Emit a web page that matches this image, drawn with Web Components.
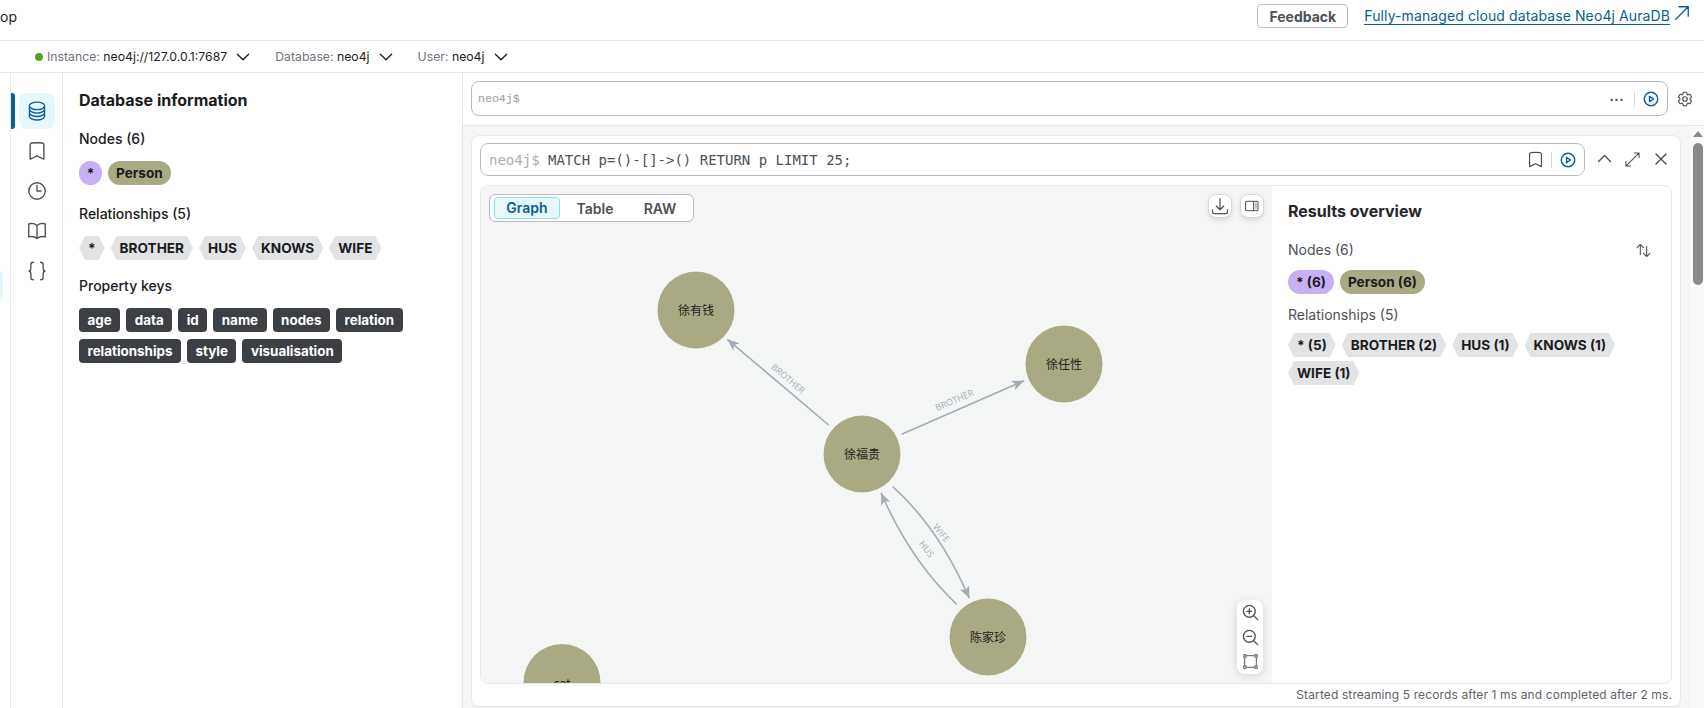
<!DOCTYPE html>
<html>
<head>
<meta charset="utf-8">
<title>Neo4j Browser</title>
<style>
  html, body { margin: 0; height: 708px; overflow: hidden; background: #fff; }
  body { font-family: Inter, "Noto Sans CJK SC", sans-serif; font-size: 14px; color: #1a1b1d; }
</style>
</head>
<body>
<nb-app></nb-app>

<script>
(function() {

  const PATHS = {
    db: 'M20.25 6.375c0 2.278-3.694 4.125-8.25 4.125S3.75 8.653 3.75 6.375m16.5 0c0-2.278-3.694-4.125-8.25-4.125S3.75 4.097 3.75 6.375m16.5 0v11.25c0 2.278-3.694 4.125-8.25 4.125s-8.25-1.847-8.25-4.125V6.375m16.5 0v3.75m-16.5-3.75v3.75m16.5 0v3.75C20.25 16.153 16.556 18 12 18s-8.25-1.847-8.25-4.125v-3.75m16.5 0c0 2.278-3.694 4.125-8.25 4.125s-8.25-1.847-8.25-4.125',
    bookmark: 'M17.593 3.322c1.1.128 1.907 1.077 1.907 2.185V21L12 17.25 4.5 21V5.507c0-1.108.806-2.057 1.907-2.185a48.507 48.507 0 0 1 11.186 0Z',
    clock: 'M12 6v6h4.5m4.5 0a9 9 0 1 1-18 0 9 9 0 0 1 18 0Z',
    book: 'M12 6.042A8.967 8.967 0 0 0 6 3.75c-1.052 0-2.062.18-3 .512v14.25A8.987 8.987 0 0 1 6 18c2.305 0 4.408.867 6 2.292m0-14.25a8.966 8.966 0 0 1 6-2.292c1.052 0 2.062.18 3 .512v14.25A8.987 8.987 0 0 0 18 18a8.967 8.967 0 0 0-6 2.292m0-14.25v14.25',
    braces: 'M8 2.5c-2 0-2.700.8-2.700 2.500v4.200c0 1.600-.6 2.400-2 2.800 1.400.4 2 1.200 2 2.800V19c0 1.700.7 2.500 2.700 2.500M16 2.500c2 0 2.700.8 2.700 2.500v4.200c0 1.600.6 2.400 2 2.800-1.400.4-2 1.200-2 2.800V19c0 1.700-.7 2.500-2.700 2.500',
    gear: 'M9.594 3.94c.09-.542.56-.94 1.11-.94h2.593c.55 0 1.02.398 1.11.94l.213 1.281c.063.374.313.686.645.87.074.04.147.083.22.127.325.196.72.257 1.075.124l1.217-.456a1.125 1.125 0 0 1 1.37.49l1.296 2.247a1.125 1.125 0 0 1-.26 1.431l-1.003.827c-.293.241-.438.613-.43.992a7.723 7.723 0 0 1 0 .255c-.008.378.137.75.43.991l1.004.827c.424.35.534.955.26 1.43l-1.298 2.247a1.125 1.125 0 0 1-1.369.491l-1.217-.456c-.355-.133-.75-.072-1.076.124a6.47 6.47 0 0 1-.22.128c-.331.183-.581.495-.644.869l-.213 1.281c-.09.543-.56.94-1.11.94h-2.594c-.55 0-1.019-.398-1.11-.94l-.213-1.281c-.062-.374-.312-.686-.644-.87a6.52 6.52 0 0 1-.22-.127c-.325-.196-.72-.257-1.076-.124l-1.217.456a1.125 1.125 0 0 1-1.369-.49l-1.297-2.247a1.125 1.125 0 0 1 .26-1.431l1.004-.827c.292-.24.437-.613.43-.991a6.932 6.932 0 0 1 0-.255c.007-.38-.138-.751-.43-.992l-1.004-.827a1.125 1.125 0 0 1-.26-1.43l1.297-2.247a1.125 1.125 0 0 1 1.37-.491l1.216.456c.356.133.751.072 1.076-.124.072-.044.146-.086.22-.128.332-.183.582-.495.644-.869l.214-1.28ZM15 12a3 3 0 1 1-6 0 3 3 0 0 1 6 0Z',
    chevdown: 'm19.5 8.25-7.5 7.5-7.5-7.500',
    chevup: 'm4.500 15.750 7.500-7.500 7.500 7.500',
    close: 'M6 18 18 6M6 6l12 12',
    external: 'm4.500 19.500 15-15m0 0H8.250m11.250 0v11.250',
    expand: 'M4.500 19.500 19.500 4.500m0 0h-5.500m5.500 0v5.500M4.500 19.500h5.500m-5.500 0V14',
    play: 'M21 12a9 9 0 1 1-18 0 9 9 0 0 1 18 0ZM10 8.500v7l5.500-3.500-5.500-3.500Z',
    download: 'M3 16.500v2.250A2.250 2.250 0 0 0 5.250 21h13.500A2.250 2.250 0 0 0 21 18.750V16.500M16.500 12 12 16.500m0 0L7.500 12m4.500 4.500V3',
    panel: 'M3 5h18v14H3zM14.500 5v14M17.500 9h1M17.500 12h1M17.500 15h1',
    sort: 'M3 8l4.500-4.500L12 8M7.500 3.500V18M12 16l4.500 4.500L21 16M16.500 20.500V6',
    zoomin: 'm21 21-5.197-5.197m0 0A7.500 7.500 0 1 0 5.196 5.196a7.500 7.500 0 0 0 10.607 10.607ZM10.500 7.500v6m3-3h-6',
    zoomout: 'm21 21-5.197-5.197m0 0A7.500 7.500 0 1 0 5.196 5.196a7.500 7.500 0 0 0 10.607 10.607ZM13.500 10.500h-6',
    fit: 'M6.500 4.500h11M6.500 19.500h11M4.500 6.500v11M19.500 6.500v11M3.500 3.500h3v3h-3zM17.500 3.500h3v3h-3zM3.500 17.500h3v3h-3zM17.500 17.500h3v3h-3z'
  };

  class NbIcon extends HTMLElement {
    connectedCallback() {
      const size = this.getAttribute('size') || 16;
      const sw = this.getAttribute('sw') || 1.5;
      this.attachShadow({mode: 'open'}).innerHTML = `
        <style>
          :host { display: inline-flex; flex: none; color: inherit; line-height: 0; }
        </style>
        <svg width="${size}" height="${size}" viewBox="0 0 24 24" fill="none" stroke="currentColor"
             stroke-width="${sw}" stroke-linecap="round" stroke-linejoin="round"><path d="${PATHS[this.getAttribute('name')]}"/></svg>`;
    }
  }

  // label pill, round for nodes, hexagon for relationships, square for keys
  class NbToken extends HTMLElement {
    connectedCallback() {
      this.attachShadow({mode: 'open'}).innerHTML = `
        <style>
          :host {
            display: inline-flex; align-items: center; height: 24px; box-sizing: border-box;
            padding: 0 8px; font-size: 13.600px; font-weight: 700; color: #1a1b1d;
            white-space: nowrap; background: #e2e3e5;
          }
          :host([kind=node]) { border-radius: 12px; background: #a9a983; }
          :host([kind=any]) { border-radius: 12px; background: #c9b0f6; }
          :host([kind=rel]) {
            padding: 0 9px;
            clip-path: polygon(6px 0, calc(100% - 6px) 0, 100% 50%, calc(100% - 6px) 100%, 6px 100%, 0 50%);
          }
          :host([kind=key]) { border-radius: 4px; background: #3c3f44; color: #fff; font-size: 13.400px; padding: 0 8.500px; }
        </style>
        <slot></slot>`;
    }
  }

  class NbTopbar extends HTMLElement {
    connectedCallback() {
      this.attachShadow({mode: 'open'}).innerHTML = `
        <style>
          :host {
            display: flex; align-items: center; height: 41px; box-sizing: border-box;
            border-bottom: 1px solid #e6e8eb; padding: 0 12px 8px 0;
          }
          .name { flex: 1; font-size: 14px; }
          button {
            height: 24px; width: 91px; padding: 0; margin-right: 16px; font: 700 14px Inter, sans-serif;
            color: #4d5157; background: #fff; border: 1px solid #b9bdc2; border-radius: 4px;
          }
          a { color: #0a6190; text-decoration: none; border-bottom: 1px solid #0a6190; font-size: 14px; line-height: 17px; letter-spacing: .1px; }
          nb-icon { color: #0a6190; margin: 0 0 6px 2px; }
        </style>
        <span class="name">op</span>
        <button>Feedback</button>
        <a>Fully-managed cloud database Neo4j AuraDB</a>
        <nb-icon name="external" size="20" sw="1.600"></nb-icon>`;
    }
  }

  class NbConnbar extends HTMLElement {
    connectedCallback() {
      this.attachShadow({mode: 'open'}).innerHTML = `
        <style>
          :host {
            display: flex; align-items: center; height: 32px; box-sizing: border-box;
            border-bottom: 1px solid #e6e8eb; padding-left: 35px; font-size: 12.250px; color: #6f747b;
          }
          .dot { width: 8px; height: 8px; border-radius: 50%; background: #5b9e27; margin-right: 4px; }
          b { font-weight: 400; color: #1f2125; }
          nb-icon { color: #1f2125; margin: 0 23px 0 7px; }
        </style>
        <span class="dot"></span>
        <span>Instance: <b>neo4j://127.0.0.1:7687</b></span><nb-icon name="chevdown" size="18" sw="1.800"></nb-icon>
        <span>Database: <b>neo4j</b></span><nb-icon name="chevdown" size="18" sw="1.800"></nb-icon>
        <span>User: <b>neo4j</b></span><nb-icon name="chevdown" size="18" sw="1.800"></nb-icon>`;
    }
  }

  class NbSidenav extends HTMLElement {
    connectedCallback() {
      const items = ['db', 'bookmark', 'clock', 'book', 'braces'];
      this.attachShadow({mode: 'open'}).innerHTML = `
        <style>
          :host {
            display: flex; flex-direction: column; width: 53px; box-sizing: border-box; flex: none;
            border-left: 1px solid #e6e8eb; border-right: 1px solid #e6e8eb;
            padding: 20px 0 0 8px; gap: 4px;
          }
          div { position: relative; width: 36px; height: 36px; display: flex; align-items: center; justify-content: center; color: #4d5157; border-radius: 8px; }
          div.on { background: #e6f8fb; color: #0a6190; }
          div.on::before { content: ""; position: absolute; left: -8px; top: 0; bottom: 0; width: 4px; background: #0a6190; border-radius: 0 3px 3px 0; }
        </style>
        ${items.map((n, i) => `<div class="${i ? '' : 'on'}"><nb-icon name="${n}" size="22"></nb-icon></div>`).join('')}`;
    }
  }

  class NbDrawer extends HTMLElement {
    connectedCallback() {
      const keys = ['age', 'data', 'id', 'name', 'nodes', 'relation', 'relationships', 'style', 'visualisation'];
      this.attachShadow({mode: 'open'}).innerHTML = `
        <style>
          :host {
            display: block; width: 400px; box-sizing: border-box; flex: none;
            border-right: 1px solid #e6e8eb; padding: 17px 16px 0;
          }
          h3 { margin: 0; font-size: 16px; line-height: 20px; font-weight: 700; }
          h4 { margin: 19px 0 12px; font-size: 14px; line-height: 20px; font-weight: 500; }
          h4.keys { margin-top: 16px; }
          .row { display: flex; flex-wrap: wrap; gap: 7px 6px; }
          nb-token[kind=any] { width: 23px; padding: 0; justify-content: center; }
        </style>
        <h3>Database information</h3>
        <h4>Nodes (6)</h4>
        <div class="row"><nb-token kind="any">*</nb-token><nb-token kind="node">Person</nb-token></div>
        <h4>Relationships (5)</h4>
        <div class="row">
          <nb-token kind="rel">*</nb-token><nb-token kind="rel">BROTHER</nb-token><nb-token kind="rel">HUS</nb-token><nb-token kind="rel">KNOWS</nb-token><nb-token kind="rel">WIFE</nb-token>
        </div>
        <h4 class="keys">Property keys</h4>
        <div class="row">${keys.map(k => `<nb-token kind="key">${k}</nb-token>`).join('')}</div>`;
    }
  }

  class NbEditor extends HTMLElement {
    connectedCallback() {
      this.attachShadow({mode: 'open'}).innerHTML = `
        <style>
          :host {
            display: flex; align-items: center; height: 53px; box-sizing: border-box; flex: none;
            padding: 0 0 0 8px; border-bottom: 1px solid #e6e8eb;
          }
          .box {
            flex: 1; height: 35px; box-sizing: border-box; display: flex; align-items: center; margin-top: -1px;
            border: 1px solid #b9bdc2; border-radius: 8px; padding: 0 7px 0 6px;
          }
          .prompt { flex: 1; font: 11.600px "Liberation Mono", monospace; color: #9a9ea4; }
          .more { font: 700 13px Inter, sans-serif; letter-spacing: .5px; color: #4d5157; margin: -5px 10px 0 0; }
          .sep { width: 1px; height: 16px; background: #d8dbdf; margin-right: 7px; }
          .play { color: #0a6190; }
          .gear { width: 34px; padding-right: 2px; display: flex; justify-content: center; color: #4d5157; margin-top: -1px; }
        </style>
        <div class="box">
          <span class="prompt">neo4j$</span>
          <span class="more">...</span><span class="sep"></span>
          <nb-icon class="play" name="play" size="18" sw="1.900"></nb-icon>
        </div>
        <div class="gear"><nb-icon name="gear" size="18" sw="1.600"></nb-icon></div>`;
    }
  }

  class NbGraph extends HTMLElement {
    connectedCallback() {
      const nodes = [
        [696, 310, '徐有钱'], [1064, 364, '徐任性'], [862, 454, '徐福贵'], [988, 637, '陈家珍'], [562, 682.5, 'cat']
      ];
      const edges = [
        'M828.7 425 L727.3 339.3', 'M901.7 434.3 L1024 380.7',
        'M892.7 486.7 Q939 528 969.3 598.3', 'M956.7 604.3 Q910 560 881 492.7'
      ];
      const labels = [
        [786, 381, 40, 'BROTHER'], [955.7, 403, -23, 'BROTHER'], [939, 535, 51, 'WIFE'], [924, 551, 53, 'HUS']
      ];
      this.attachShadow({mode: 'open'}).innerHTML = `
        <style>
          :host { display: block; position: relative; width: 791px; flex: none; background: #f4f6f6; overflow: hidden; }
          svg.canvas { position: absolute; left: 0; top: 0; }
          .tabs {
            position: absolute; left: 8px; top: 8px; display: flex; align-items: center; box-sizing: border-box;
            width: 205px; height: 28px; padding: 0 4px; background: #fff; border: 1px solid #b9bdc2; border-radius: 6px;
            font-size: 14px; font-weight: 600; color: #4d5157;
          }
          .tabs span { text-align: center; }
          .tabs .on { width: 66px; height: 22px; line-height: 20px; box-sizing: border-box; background: #e6f8fb; border: 1px solid #8fdfe9; border-radius: 4px; color: #0a6190; }
          .tabs .t { width: 66px; margin-left: 2px; }
          .tabs .r { width: 52px; margin-left: 6px; }
          .tool {
            position: absolute; top: 8px; width: 24px; height: 24px; box-sizing: border-box; display: flex; align-items: center; justify-content: center;
            background: #fff; border: 1px solid #d4d7db; border-radius: 8px; color: #4d5157; box-shadow: 0 2px 5px rgba(0,0,0,.12);
          }
          .zoom {
            position: absolute; right: 9px; bottom: 9px; width: 26px; height: 74px; padding: 3px 0; box-sizing: border-box;
            display: flex; flex-direction: column; align-items: center; justify-content: space-between;
            background: #fff; border-radius: 8px; color: #4d5157; box-shadow: 0 2px 8px rgba(0,0,0,.14);
          }
          .fit { color: #7b8086; }
        </style>
        <svg class="canvas" width="791" height="498" viewBox="481 186 791 498">
          <defs>
            <marker id="head" markerUnits="userSpaceOnUse" markerWidth="12" markerHeight="10" refX="12" refY="5" orient="auto" viewBox="0 0 12 10">
              <path d="M12 5 L0 0 L3 5 L0 10 Z" fill="#a5abb6"/>
            </marker>
          </defs>
          ${edges.map(d => `<path d="${d}" fill="none" stroke="#a5abb6" stroke-width="1.600" marker-end="url(#head)"/>`).join('')}
          ${labels.map(l => `<text x="${l[0]}" y="${l[1]}" transform="rotate(${l[2]} ${l[0]} ${l[1]})" text-anchor="middle" font-size="9" font-family="'Open Sans', sans-serif" fill="#a5abb6">${l[3]}</text>`).join('')}
          ${nodes.map(n => `<circle cx="${n[0]}" cy="${n[1]}" r="38.500" fill="#a9a983"/>
            <text x="${n[0]}" y="${n[1] + 5}" text-anchor="middle" font-size="12" font-family="'Noto Sans CJK SC', sans-serif" fill="#222">${n[2]}</text>`).join('')}
        </svg>
        <div class="tabs"><span class="on">Graph</span><span class="t">Table</span><span class="r">RAW</span></div>
        <div class="tool" style="right:40px"><nb-icon name="download" size="20" sw="1.500"></nb-icon></div>
        <div class="tool" style="right:8px"><nb-icon name="panel" size="16" sw="1.500"></nb-icon></div>
        <div class="zoom">
          <nb-icon name="zoomin" size="19" sw="1.700"></nb-icon>
          <nb-icon name="zoomout" size="19" sw="1.700"></nb-icon>
          <nb-icon class="fit" name="fit" size="19" sw="1.700"></nb-icon>
        </div>`;
    }
  }

  class NbOverview extends HTMLElement {
    connectedCallback() {
      this.attachShadow({mode: 'open'}).innerHTML = `
        <style>
          :host { display: block; flex: 1; padding: 15px 16px 0 16px; box-sizing: border-box; }
          h3 { margin: 0; font-size: 16px; line-height: 20px; font-weight: 700; color: #24262a; }
          h4 { margin: 0; font-size: 14px; line-height: 20px; font-weight: 400; color: #4d5157; display: flex; align-items: center; justify-content: space-between; }
          h4 nb-icon { margin-right: 3px; }
          .n { margin-top: 19px; }
          .rows { display: flex; flex-wrap: wrap; gap: 4px 6px; margin-top: 10px; }
          .r { margin-top: 11px; }
          .rows.rel { margin-top: 8px; }
        </style>
        <h3>Results overview</h3>
        <h4 class="n">Nodes (6)<nb-icon name="sort" size="17" sw="1.500"></nb-icon></h4>
        <div class="rows"><nb-token kind="any">* (6)</nb-token><nb-token kind="node">Person (6)</nb-token></div>
        <h4 class="r">Relationships (5)</h4>
        <div class="rows rel">
          <nb-token kind="rel">* (5)</nb-token><nb-token kind="rel">BROTHER (2)</nb-token><nb-token kind="rel">HUS (1)</nb-token><nb-token kind="rel">KNOWS (1)</nb-token><nb-token kind="rel">WIFE (1)</nb-token>
        </div>`;
    }
  }

  class NbFrame extends HTMLElement {
    connectedCallback() {
      this.attachShadow({mode: 'open'}).innerHTML = `
        <style>
          :host {
            display: flex; flex-direction: column; box-sizing: border-box; height: 572px;
            background: #fff; border: 1px solid #e6e8eb; border-radius: 8px; padding: 7px 8px 0;
          }
          .head { display: flex; align-items: center; height: 33px; flex: none; }
          .query {
            width: 1105px; height: 33px; box-sizing: border-box; display: flex; align-items: center;
            border: 1px solid #b9bdc2; border-radius: 8px; padding: 0 7px 0 8px;
            font: 14px "DejaVu Sans Mono", monospace; color: #4d5157; white-space: pre;
          }
          .query i { font-style: normal; color: #a9adb3; }
          .query span { flex: 1; }
          .query .sep { flex: none; width: 1px; height: 16px; background: #d8dbdf; margin: 0 7px 0 6px; }
          .play { color: #0a6190; }
          .ctl { display: flex; flex: 1; justify-content: space-between; color: #4d5157; padding: 0 1px 0 10px; }
          .result {
            display: flex; height: 499px; margin-top: 9px; box-sizing: border-box;
            border: 1px solid #e6e8eb; border-radius: 8px; overflow: hidden; flex: none;
          }
          .status { text-align: right; font-size: 12px; line-height: 22px; color: #5e636a; letter-spacing: .12px; }
        </style>
        <div class="head">
          <div class="query"><span><i>neo4j$</i> MATCH p=()-[]-&gt;() RETURN p LIMIT 25;</span>
            <nb-icon name="bookmark" size="19"></nb-icon><span class="sep"></span>
            <nb-icon class="play" name="play" size="18" sw="1.900"></nb-icon>
          </div>
          <div class="ctl">
            <nb-icon name="chevup" size="19" sw="1.700"></nb-icon>
            <nb-icon name="expand" size="21" sw="1.200"></nb-icon>
            <nb-icon name="close" size="20" sw="1.700"></nb-icon>
          </div>
        </div>
        <div class="result"><nb-graph></nb-graph><nb-overview></nb-overview></div>
        <div class="status">Started streaming 5 records after 1 ms and completed after 2 ms.</div>`;
    }
  }

  class NbScrollbar extends HTMLElement {
    connectedCallback() {
      this.attachShadow({mode: 'open'}).innerHTML = `
        <style>
          :host { display: block; width: 14px; flex: none; padding: 5px 0 0 3px; box-sizing: border-box; background: #f8f9fa; }
          .up { width: 0; height: 0; margin-left: 0; border: 5px solid transparent; border-top: 0; border-bottom: 6px solid #8a8a8a; }
          .thumb { width: 10px; height: 142px; margin-top: 6px; background: #8a8a8a; border-radius: 5px; }
        </style>
        <div class="up"></div><div class="thumb"></div>`;
    }
  }

  class NbApp extends HTMLElement {
    connectedCallback() {
      this.attachShadow({mode: 'open'}).innerHTML = `
        <style>
          :host { display: flex; flex-direction: column; height: 708px; overflow: hidden; }
          .body { display: flex; flex: 1; min-height: 0; }
          .gutter { width: 10px; flex: none; position: relative; }
          .gutter::after { content: ""; position: absolute; left: -10px; top: 197px; width: 13px; height: 31px; background: #e6f8fb; border-radius: 0 5px 5px 0; }
          .main { flex: 1; display: flex; flex-direction: column; min-width: 0; }
          .scroll { flex: 1; display: flex; min-height: 0; background: #f4f6f6; }
          .frames { flex: 1; padding: 9px 9px 0 8px; min-width: 0; }
        </style>
        <nb-topbar></nb-topbar>
        <nb-connbar></nb-connbar>
        <div class="body">
          <div class="gutter"></div>
          <nb-sidenav></nb-sidenav>
          <nb-drawer></nb-drawer>
          <div class="main">
            <nb-editor></nb-editor>
            <div class="scroll">
              <div class="frames"><nb-frame></nb-frame></div>
              <nb-scrollbar></nb-scrollbar>
            </div>
          </div>
        </div>`;
    }
  }

  customElements.define('nb-icon', NbIcon);
  customElements.define('nb-token', NbToken);
  customElements.define('nb-topbar', NbTopbar);
  customElements.define('nb-connbar', NbConnbar);
  customElements.define('nb-sidenav', NbSidenav);
  customElements.define('nb-drawer', NbDrawer);
  customElements.define('nb-editor', NbEditor);
  customElements.define('nb-graph', NbGraph);
  customElements.define('nb-overview', NbOverview);
  customElements.define('nb-frame', NbFrame);
  customElements.define('nb-scrollbar', NbScrollbar);
  customElements.define('nb-app', NbApp);

})();
</script>
</body>
</html>
